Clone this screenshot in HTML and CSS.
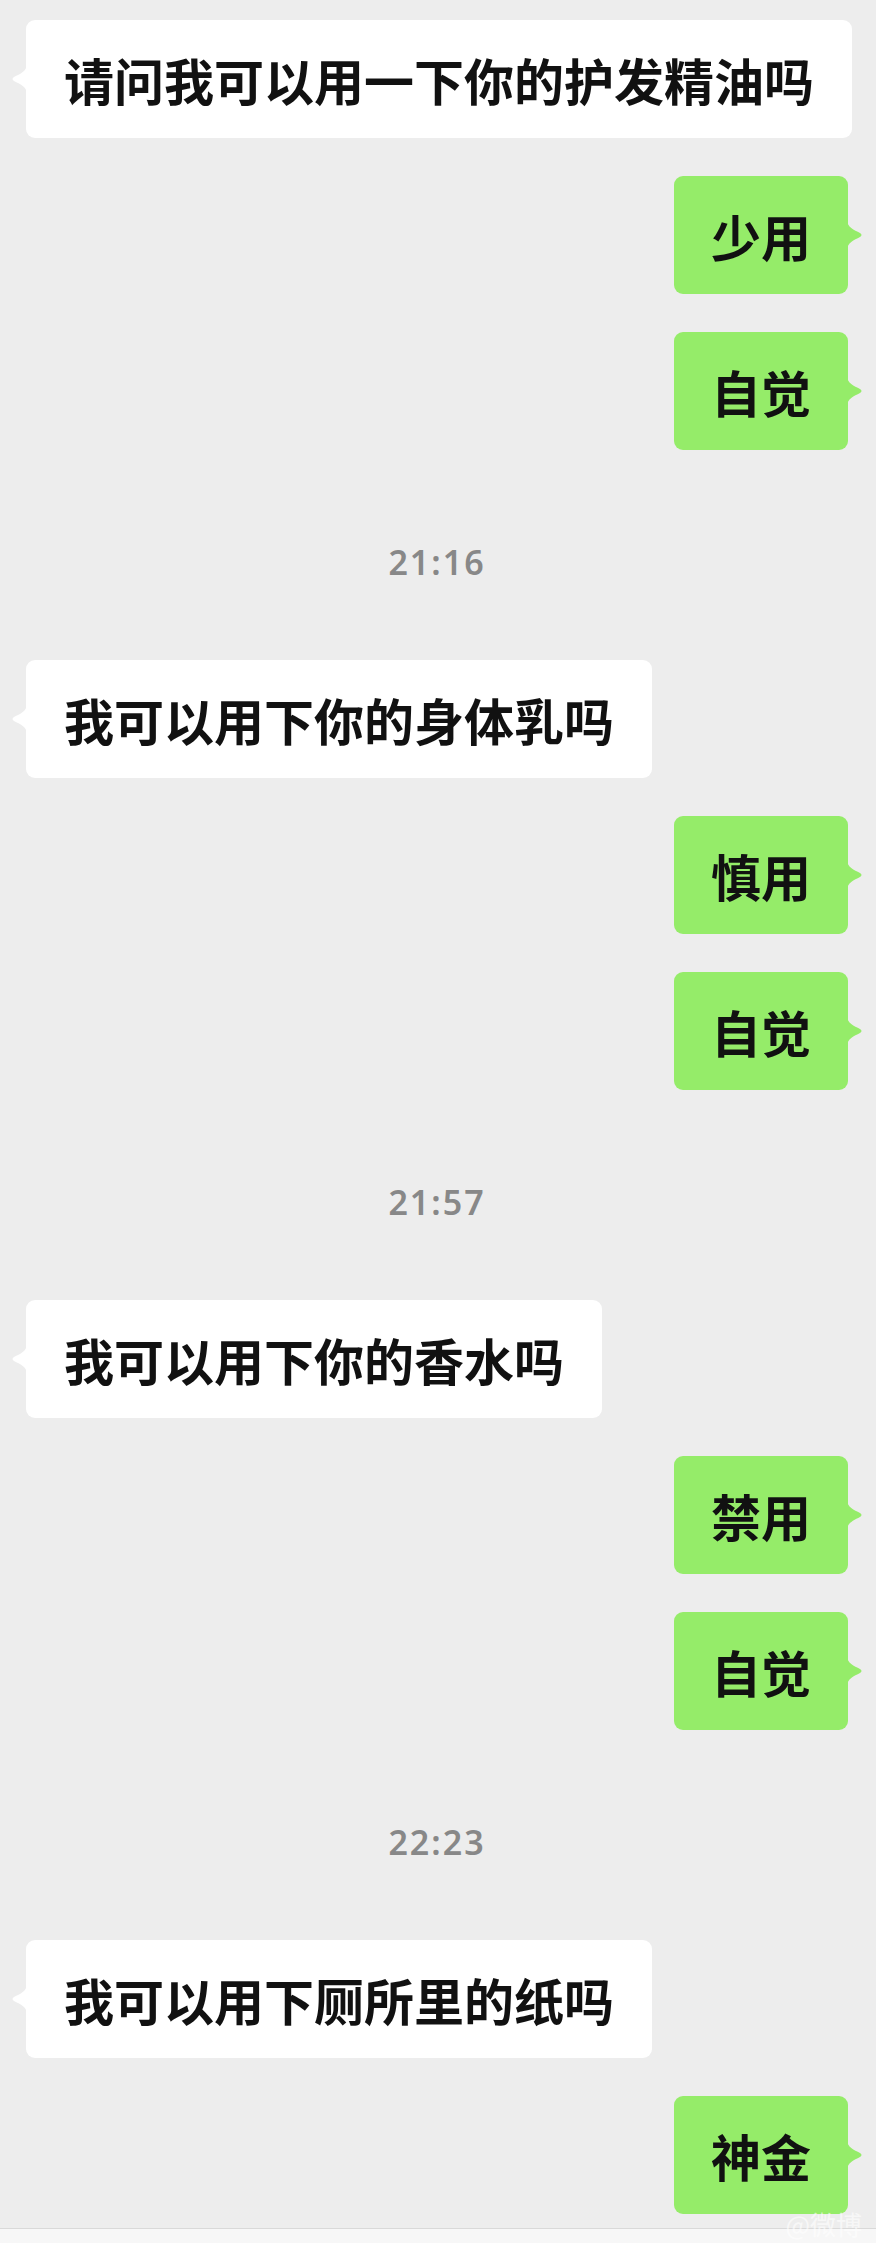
FILE: index.html
```html
<!DOCTYPE html>
<html lang="zh-CN">
<head>
    <meta charset="UTF-8">
    <meta name="viewport" content="width=device-width, initial-scale=1.0">
    <title>聊天记录</title>
    <link rel="stylesheet" href="styles.css">
</head>
<body>
    <div class="chat">
        <div class="msg left">
            <svg class="tail" viewBox="0 0 16 30"><path d="M16 0 C16 7 9 10 3 13 Q0 15 3 17 C9 20 16 23 16 30 Z"/></svg>
            请问我可以用一下你的护发精油吗
        </div>
        <div class="msg right">
            少用
            <svg class="tail" viewBox="0 0 16 30"><path d="M0 0 C0 7 7 10 13 13 Q16 15 13 17 C7 20 0 23 0 30 Z"/></svg>
        </div>
        <div class="msg right">
            自觉
            <svg class="tail" viewBox="0 0 16 30"><path d="M0 0 C0 7 7 10 13 13 Q16 15 13 17 C7 20 0 23 0 30 Z"/></svg>
        </div>

        <div class="time">21:16</div>

        <div class="msg left">
            <svg class="tail" viewBox="0 0 16 30"><path d="M16 0 C16 7 9 10 3 13 Q0 15 3 17 C9 20 16 23 16 30 Z"/></svg>
            我可以用下你的身体乳吗
        </div>
        <div class="msg right">
            慎用
            <svg class="tail" viewBox="0 0 16 30"><path d="M0 0 C0 7 7 10 13 13 Q16 15 13 17 C7 20 0 23 0 30 Z"/></svg>
        </div>
        <div class="msg right">
            自觉
            <svg class="tail" viewBox="0 0 16 30"><path d="M0 0 C0 7 7 10 13 13 Q16 15 13 17 C7 20 0 23 0 30 Z"/></svg>
        </div>

        <div class="time">21:57</div>

        <div class="msg left">
            <svg class="tail" viewBox="0 0 16 30"><path d="M16 0 C16 7 9 10 3 13 Q0 15 3 17 C9 20 16 23 16 30 Z"/></svg>
            我可以用下你的香水吗
        </div>
        <div class="msg right">
            禁用
            <svg class="tail" viewBox="0 0 16 30"><path d="M0 0 C0 7 7 10 13 13 Q16 15 13 17 C7 20 0 23 0 30 Z"/></svg>
        </div>
        <div class="msg right">
            自觉
            <svg class="tail" viewBox="0 0 16 30"><path d="M0 0 C0 7 7 10 13 13 Q16 15 13 17 C7 20 0 23 0 30 Z"/></svg>
        </div>

        <div class="time">22:23</div>

        <div class="msg left">
            <svg class="tail" viewBox="0 0 16 30"><path d="M16 0 C16 7 9 10 3 13 Q0 15 3 17 C9 20 16 23 16 30 Z"/></svg>
            我可以用下厕所里的纸吗
        </div>
        <div class="msg right">
            神金
            <svg class="tail" viewBox="0 0 16 30"><path d="M0 0 C0 7 7 10 13 13 Q16 15 13 17 C7 20 0 23 0 30 Z"/></svg>
        </div>
    </div>
    <div class="bottom-bar">
        <span class="watermark">@微博</span>
    </div>
</body>
</html>
```

FILE: styles.css
```css
body {
    margin: 0;
    background: #ededed;
    font-family: "Noto Sans CJK SC", "Noto Sans", sans-serif;
    width: 876px;
    height: 2243px;
    overflow: hidden;
    position: relative;
}
.chat {
    display: flex;
    flex-direction: column;
    padding: 20px 28px 0 26px;
}
.msg {
    position: relative;
    font-size: 50px;
    line-height: 60px;
    font-weight: 700;
    color: #111;
    padding: 29px 38px;
    border-radius: 9px;
    white-space: nowrap;
}
.msg + .msg {
    margin-top: 38px;
}
.left {
    align-self: flex-start;
    background: #ffffff;
}
.right {
    align-self: flex-end;
    padding: 29px 37px;
    background: #95ec69;
}
.tail {
    position: absolute;
    top: 50%;
    width: 16px;
    height: 30px;
    margin-top: -15px;
}
.left .tail {
    left: -15px;
    fill: #ffffff;
}
.right .tail {
    right: -15px;
    fill: #95ec69;
}
.time {
    align-self: center;
    margin: 92px 0 78px;
    font-family: "Noto Sans", sans-serif;
    font-size: 34px;
    line-height: 40px;
    font-weight: 600;
    letter-spacing: 2px;
    color: #888888;
}
.bottom-bar {
    position: absolute;
    left: 0;
    right: 0;
    bottom: 0;
    height: 14px;
    background: #f7f7f7;
    border-top: 1px solid #d9d9d9;
}
.watermark {
    position: absolute;
    right: 14px;
    bottom: 6px;
    font-size: 26px;
    line-height: 26px;
    color: rgba(255, 255, 255, 0.6);
}
```
